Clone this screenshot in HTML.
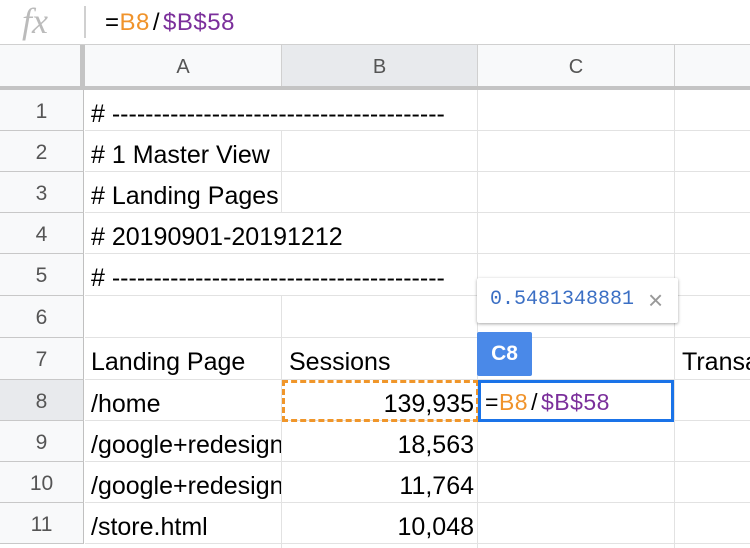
<!DOCTYPE html>
<html><head><style>
body{margin:0;width:750px;height:548px;overflow:hidden;background:#fff;font-family:"Liberation Sans",Arial,sans-serif;position:relative}
.a{position:absolute;box-sizing:border-box}
.rn{left:0;width:84px;background:#f8f9fa;color:#555;font-size:21px;text-align:center;border-right:1px solid #c0c0c0;border-bottom:1px solid #c8c8c8}
.t{font-size:25px;color:#000;white-space:nowrap;overflow:hidden;padding-top:7px}
.sl{margin:0 3px}
</style></head><body>
<div class="a" style="left:0;top:0;width:750px;height:45px;border-bottom:1px solid #d0d0d0"></div>
<div class="a" style="left:22px;top:0px;font-family:'Liberation Serif',serif;font-style:italic;font-size:36px;color:#bbb">fx</div>
<div class="a" style="left:84px;top:6px;width:2px;height:32px;background:#d0d0d0"></div>
<div class="a" style="left:105px;top:9px;font-size:24px;letter-spacing:0.5px"><span>=</span><span style="color:#f0932b">B8</span><span class="sl">/</span><span style="color:#7b2f9b">$B$58</span></div>
<div class="a" style="left:0;top:45px;width:750px;height:45px;background:#f8f9fa;border-bottom:4px solid #c4c4c4"></div>
<div class="a" style="left:0;top:45px;width:85px;height:45px;border-right:5px solid #c4c4c4"></div>
<div class="a" style="left:282px;top:45px;width:196px;height:41px;background:#e8eaed"></div>
<div class="a" style="left:85px;top:45px;width:197px;height:41px;border-right:1px solid #d0d0d0;text-align:center;line-height:44px;font-size:20px;color:#555">A</div>
<div class="a" style="left:282px;top:45px;width:196px;height:41px;border-right:1px solid #d0d0d0;text-align:center;line-height:44px;font-size:20px;color:#555">B</div>
<div class="a" style="left:478px;top:45px;width:197px;height:41px;border-right:1px solid #d0d0d0;text-align:center;line-height:44px;font-size:20px;color:#555">C</div>
<div class="a" style="left:281px;top:90px;width:1px;height:458px;background:#e2e2e2"></div>
<div class="a" style="left:477px;top:90px;width:1px;height:458px;background:#e2e2e2"></div>
<div class="a" style="left:674px;top:90px;width:1px;height:458px;background:#e2e2e2"></div>
<div id="rows"></div>
<script>
var tops=[90,131,172,213,254,296,338,380,421,462,503,544];
var A=["# ----------------------------------------","# 1 Master View","# Landing Pages","# 20190901-20191212","# ----------------------------------------","","Landing Page","/home","/google+redesign","/google+redesign","/store.html"];
var B=["","","","","","","Sessions","139,935","18,563","11,764","10,048"];
var h="";
for(var i=0;i<11;i++){var t=tops[i],ht=tops[i+1]-t;
h+='<div class="a" style="left:85px;top:'+t+'px;width:665px;height:'+ht+'px;border-bottom:1px solid #e2e2e2"></div>';
h+='<div class="a rn" style="top:'+t+'px;height:'+ht+'px;line-height:'+(ht+2)+'px;'+(i==7?'background:#e8eaed;':'')+'">'+(i+1)+'</div>';
var wide=(i==0||i==4||i==3);
h+='<div class="a t" style="left:91px;top:'+t+'px;width:'+(wide?386:190)+'px;line-height:'+(ht-7)+'px;'+(wide?'background:#fff;height:'+(ht-1)+'px':'')+'">'+A[i]+'</div>';
if(B[i])h+='<div class="a t" style="left:'+(i==6?289:282)+'px;top:'+t+'px;width:'+(i==6?188:192)+'px;line-height:'+(ht-7)+'px;text-align:'+(i==6?'left':'right')+'">'+B[i]+'</div>';}
document.getElementById('rows').innerHTML=h;
</script>
<div class="a t" style="left:682px;top:338px;line-height:35px">Transa</div>
<div class="a" style="left:282px;top:380px;width:197px;height:42px;border:3px dashed #f0962a"></div>
<div class="a" style="left:477px;top:278px;width:201px;height:45px;background:#fff;box-shadow:0 1px 3px rgba(0,0,0,.35);border-radius:2px"></div>
<div class="a" style="left:490px;top:288px;font-family:'Liberation Mono',monospace;font-size:20px;color:#3b6fc4">0.5481348881</div>
<div class="a" style="left:648px;top:285px;font-size:26px;color:#999">×</div>
<div class="a" style="left:477px;top:332px;width:55px;height:44px;background:#4a89e8;color:#fff;font-weight:bold;font-size:21px;text-align:center;line-height:44px;border-radius:2px">C8</div>
<div class="a" style="left:478px;top:380px;width:196px;height:42px;border:3px solid #1a73e8;background:#fff;font-size:23px;line-height:38px;padding-left:4px;letter-spacing:0.5px"><span>=</span><span style="color:#f0932b">B8</span><span class="sl">/</span><span style="color:#7b2f9b">$B$58</span></div>
</body></html>
